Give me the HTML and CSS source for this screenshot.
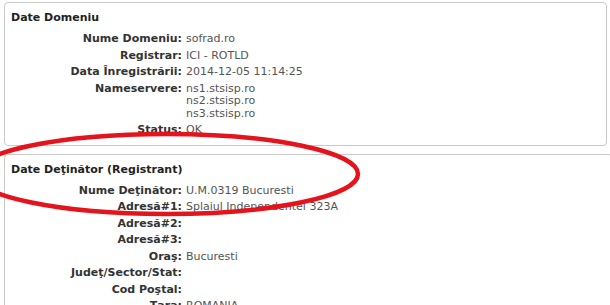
FILE: index.html
```html
<!DOCTYPE html>
<html lang="ro">
<head>
    <meta charset="UTF-8">
    <title>Date Domeniu - sofrad.ro</title>
    <link rel="stylesheet" href="styles.css">
</head>
<body>
<div class="page">
    <div class="box">
        <h3 class="box-title">Date Domeniu</h3>
        <div class="details">
            <div class="label">Nume Domeniu:</div>
            <div class="value">sofrad.ro</div>

            <div class="label">Registrar:</div>
            <div class="value">ICI - ROTLD</div>

            <div class="label">Data Înregistrării:</div>
            <div class="value">2014-12-05 11:14:25</div>

            <div class="label">Nameservere:</div>
            <div class="value">
                <div>ns1.stsisp.ro</div>
                <div>ns2.stsisp.ro</div>
                <div>ns3.stsisp.ro</div>
            </div>

            <div class="label">Status:</div>
            <div class="value">OK</div>
        </div>
    </div>

    <div class="box box-second">
        <h3 class="box-title">Date Deţinător (Registrant)</h3>
        <div class="details">
            <div class="label">Nume Deţinător:</div>
            <div class="value">U.M.0319 Bucuresti</div>

            <div class="label">Adresă#1:</div>
            <div class="value">Splaiul Independentei 323A</div>

            <div class="label">Adresă#2:</div>
            <div class="value"></div>

            <div class="label">Adresă#3:</div>
            <div class="value"></div>

            <div class="label">Oraş:</div>
            <div class="value">Bucuresti</div>

            <div class="label">Judeţ/Sector/Stat:</div>
            <div class="value"></div>

            <div class="label">Cod Poştal:</div>
            <div class="value"></div>

            <div class="label">Ţara:</div>
            <div class="value">ROMANIA</div>
        </div>
    </div>

    <!-- hand-drawn annotation over the registrant name -->
    <svg class="mark" width="610" height="305" viewBox="0 0 610 305">
        <ellipse cx="166" cy="174" rx="192" ry="40" fill="none" stroke="#e5131b" stroke-width="4.5"/>
    </svg>
</div>
</body>
</html>
```

FILE: styles.css
```css
* {
    box-sizing: border-box;
    margin: 0;
    padding: 0;
}

body {
    background-color: #fff;
    font-family: "DejaVu Sans", Verdana, sans-serif;
    font-size: 11px;
    color: #555;
    overflow: hidden;
}

.page {
    position: relative;
    width: 610px;
    height: 305px;
    padding: 2px 3px 0 4px;
}

.box {
    border: 1px solid #c9c9c9;
    border-radius: 4px;
    padding: 8px 0 6px 6px;
}

.box-second {
    margin-top: 8px;
    margin-right: -6px;
}

.box-title {
    font-size: 11px;
    font-weight: bold;
    color: #222;
    line-height: 13px;
    margin-bottom: 7px;
}

.details {
    display: grid;
    grid-template-columns: 171px 1fr;
    column-gap: 4px;
    line-height: 12.5px;
}

.label,
.value {
    padding: 2px 0;
    min-height: 16.5px;
}

.label {
    text-align: right;
    font-weight: bold;
    color: #333;
}

.mark {
    position: absolute;
    left: 0;
    top: 0;
    pointer-events: none;
}
```
